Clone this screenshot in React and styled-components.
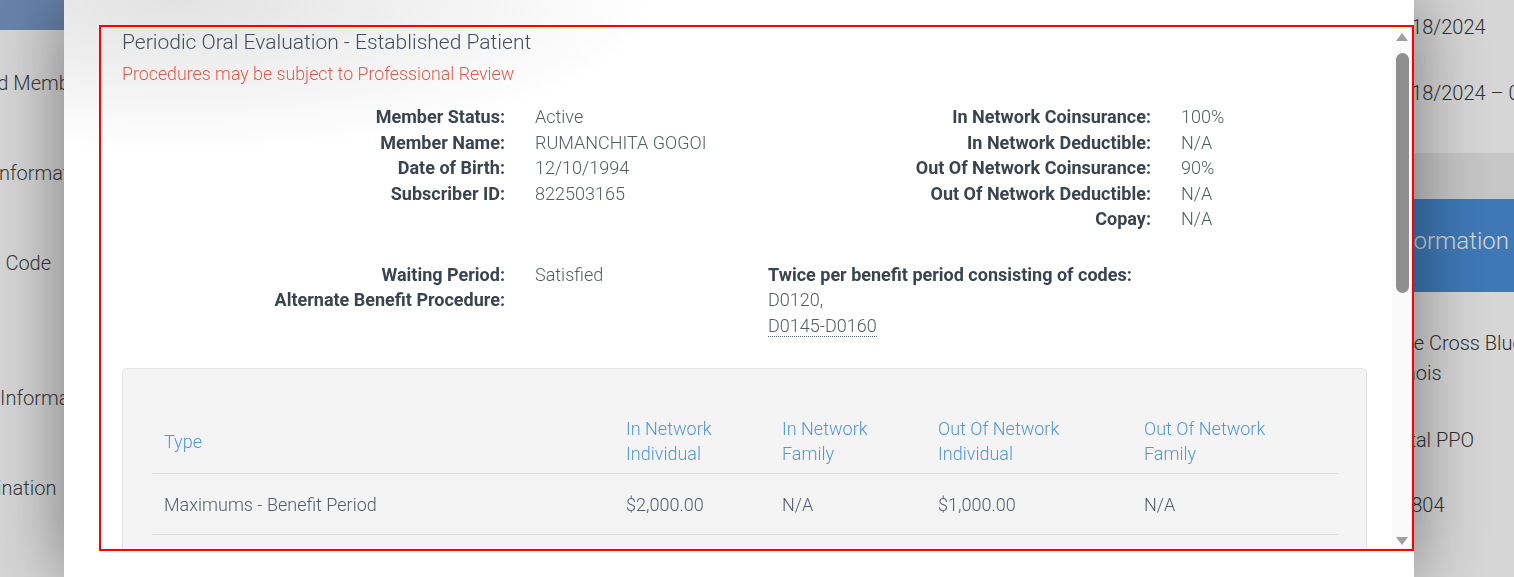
import React from 'react';
import styled, { createGlobalStyle } from 'styled-components';

const memberInfo = [
    ['Member Status:', 'Active'],
    ['Member Name:', 'RUMANCHITA GOGOI'],
    ['Date of Birth:', '12/10/1994'],
    ['Subscriber ID:', '822503165'],
];

const coverageInfo = [
    ['In Network Coinsurance:', '100%'],
    ['In Network Deductible:', 'N/A'],
    ['Out Of Network Coinsurance:', '90%'],
    ['Out Of Network Deductible:', 'N/A'],
    ['Copay:', 'N/A'],
];

const waitingInfo = [
    ['Waiting Period:', 'Satisfied'],
    ['Alternate Benefit Procedure:', ''],
];

const columns = [
    { lines: ['Type'], width: 462 },
    { lines: ['In Network', 'Individual'], width: 156 },
    { lines: ['In Network', 'Family'], width: 156 },
    { lines: ['Out Of Network', 'Individual'], width: 206 },
    { lines: ['Out Of Network', 'Family'], width: 206 },
];

const limitRows = [
    ['Maximums - Benefit Period', '$2,000.00', 'N/A', '$1,000.00', 'N/A'],
    ['Maximums - Lifetime', 'N/A', 'N/A', 'N/A', 'N/A'],
    ['Deductibles - Benefit Period', 'N/A', 'N/A', 'N/A', 'N/A'],
];

// page behind the dialog, only slivers of it show
const sideLabels = [
    { text: 'Insured Member', shift: -57, gap: 38 },
    { text: 'Subscriber Information', shift: -105, gap: 60 },
    { text: 'Group Code', shift: -53, gap: 60 },
    { text: 'Provider Information', shift: -77, gap: 105 },
    { text: 'Coordination', shift: -56, gap: 60 },
];

const planFields = [
    { text: 'Blue Cross Blue Shield of Illinois', shift: 0, gap: 0, wrap: true },
    { text: 'Dental PPO', shift: -11, gap: 37 },
    { text: '10804', shift: 3, gap: 35 },
];

const ArrowIcon = ({ down }) => (
    <svg width='12' height='8' viewBox='0 0 12 8'>
        <polygon points={down ? '0,0 12,0 6,8' : '6,0 12,8 0,8'} fill='#a0a0a0' />
    </svg>
);

const App = () => {
    return (
        <>
            <GlobalStyle />
            <Page>
                <LeftCard>
                    <LeftHeader />
                    {sideLabels.map((item) => (
                        <SideLabel key={item.text} $shift={item.shift} $gap={item.gap}>
                            {item.text}
                        </SideLabel>
                    ))}
                </LeftCard>

                <RightColumn>
                    <DateCard>
                        <SideText>01/18/2024</SideText>
                        <SideText $gap={36}>01/18/2024 – 01/18/2025</SideText>
                    </DateCard>
                    <PlanCard>
                        <PlanHeader>Information</PlanHeader>
                        <PlanBody>
                            {planFields.map((item) => (
                                <SideText
                                    key={item.text}
                                    $shift={item.shift}
                                    $gap={item.gap}
                                    $wrap={item.wrap}
                                >
                                    {item.text}
                                </SideText>
                            ))}
                        </PlanBody>
                    </PlanCard>
                </RightColumn>
            </Page>

            <Overlay>
                <Modal>
                    <ScrollFrame>
                        <Viewport>
                            <Content>
                                <Title>Periodic Oral Evaluation - Established Patient</Title>
                                <Notice>Procedures may be subject to Professional Review</Notice>

                                <InfoGrid>
                                    <FieldList>
                                        {memberInfo.map(([label, value]) => (
                                            <React.Fragment key={label}>
                                                <Label>{label}</Label>
                                                <Value>{value}</Value>
                                            </React.Fragment>
                                        ))}
                                    </FieldList>
                                    <FieldList>
                                        {coverageInfo.map(([label, value]) => (
                                            <React.Fragment key={label}>
                                                <Label>{label}</Label>
                                                <Value>{value}</Value>
                                            </React.Fragment>
                                        ))}
                                    </FieldList>
                                </InfoGrid>

                                <InfoGrid $spaced>
                                    <FieldList>
                                        {waitingInfo.map(([label, value]) => (
                                            <React.Fragment key={label}>
                                                <Label>{label}</Label>
                                                <Value>{value}</Value>
                                            </React.Fragment>
                                        ))}
                                    </FieldList>
                                    <Frequency>
                                        <FrequencyTitle>Twice per benefit period consisting of codes:</FrequencyTitle>
                                        <Value>D0120,</Value>
                                        <Value>
                                            <CodeRange title='D0145, D0150, D0160'>D0145-D0160</CodeRange>
                                        </Value>
                                    </Frequency>
                                </InfoGrid>

                                <LimitsCard>
                                    <Table>
                                        <colgroup>
                                            {columns.map((col, i) => (
                                                <col key={i} style={{ width: col.width }} />
                                            ))}
                                        </colgroup>
                                        <thead>
                                            <tr>
                                                {columns.map((col, i) => (
                                                    <HeadCell key={i}>
                                                        {col.lines.map((line) => (
                                                            <HeadLine key={line}>{line}</HeadLine>
                                                        ))}
                                                    </HeadCell>
                                                ))}
                                            </tr>
                                        </thead>
                                        <tbody>
                                            {limitRows.map((row) => (
                                                <tr key={row[0]}>
                                                    {row.map((cell, i) => (
                                                        <Cell key={i}>{cell}</Cell>
                                                    ))}
                                                </tr>
                                            ))}
                                        </tbody>
                                    </Table>
                                </LimitsCard>
                            </Content>
                        </Viewport>

                        <ScrollTrack>
                            <ArrowButton $pad={6}>
                                <ArrowIcon />
                            </ArrowButton>
                            <Thumb />
                            <ArrowButton $pad={10}>
                                <ArrowIcon down />
                            </ArrowButton>
                        </ScrollTrack>
                    </ScrollFrame>
                </Modal>
            </Overlay>
        </>
    );
};

export default App;

/* styles */
const GlobalStyle = createGlobalStyle`
    * {
        box-sizing: border-box;
    }
    html, body {
        margin: 0;
        padding: 0;
        height: 100%;
        overflow: hidden;
    }
    body {
        font-family: Roboto, 'Liberation Sans', Arial, sans-serif;
        background: #ececec;
    }
`;

const Page = styled.div`
    display: flex;
    align-items: flex-start;
    width: 1834px;
    min-height: 100vh;
    background: #ececec;
`;

const LeftCard = styled.section`
    width: 600px;
    min-height: 100vh;
    background: #fff;
`;

const LeftHeader = styled.div`
    height: 30px;
    background: #7c9ccd;
`;

const SideLabel = styled.div`
    margin-top: ${(p) => p.$gap}px;
    margin-left: ${(p) => p.$shift}px;
    font-size: 20px;
    font-weight: 300;
    line-height: 30px;
    color: #454545;
    white-space: nowrap;
`;

const RightColumn = styled.aside`
    margin-left: auto;
    width: 468px;
    display: flex;
    flex-direction: column;
    gap: 46px;
`;

const DateCard = styled.div`
    display: flex;
    flex-direction: column;
    padding: 12px 20px 45px 15px;
    background: #fff;
`;

const PlanCard = styled.div`
    background: #fff;
    min-height: 420px;
`;

const PlanHeader = styled.div`
    height: 93px;
    display: flex;
    align-items: center;
    padding: 0 0 9px 20px;
    background: #4a90d9;
    color: #fff;
    font-size: 24px;
    font-weight: 300;
`;

const PlanBody = styled.div`
    display: flex;
    flex-direction: column;
    padding: 36px 20px;
`;

const SideText = styled.div`
    width: ${(p) => (p.$wrap ? '250px' : 'auto')};
    margin-left: ${(p) => p.$shift || 0}px;
    margin-top: ${(p) => p.$gap || 0}px;
    font-size: 20px;
    font-weight: 300;
    line-height: 30px;
    color: #3a3a3a;
    white-space: ${(p) => (p.$wrap ? 'normal' : 'nowrap')};
`;

const Overlay = styled.div`
    position: fixed;
    inset: 0;
    display: flex;
    background: rgba(0, 0, 0, 0.16);
`;

const Modal = styled.div`
    width: 1350px;
    height: 100%;
    margin-left: 64px;
    display: flex;
    flex-direction: column;
    padding: 25px 0 26px 35px;
    background:
        radial-gradient(ellipse 480px 150px at 110px 0, #e2e2e2 0%, rgba(255, 255, 255, 0) 100%),
        #fff;
    box-shadow: 0 0 70px rgba(0, 0, 0, 0.45);
`;

const ScrollFrame = styled.div`
    flex: 1;
    min-height: 0;
    display: flex;
    border: 2px solid #ff0000;
`;

const Viewport = styled.div`
    flex: 1;
    min-width: 0;
    overflow: hidden;
`;

const ScrollTrack = styled.div`
    width: 20px;
    flex-shrink: 0;
    display: flex;
    flex-direction: column;
    align-items: center;
    background: #fafafa;
`;

const ArrowButton = styled.div`
    height: 22px;
    flex-shrink: 0;
    display: flex;
    justify-content: center;
    padding-top: ${(p) => p.$pad}px;

    svg {
        display: block;
    }
`;

const Thumb = styled.div`
    width: 13px;
    height: 240px;
    margin: 4px 0 auto;
    border-radius: 7px;
    background: #8f8f8f;
`;

const Content = styled.div`
    padding: 3px 25px 40px 21px;
    font-size: 18px;
    color: #3b4350;
`;

const Title = styled.h2`
    margin: 0;
    font-size: 21px;
    font-weight: 300;
    line-height: 24px;
    color: #474d58;
`;

const Notice = styled.p`
    margin: 8px 0 0;
    font-size: 17.8px;
    font-weight: 300;
    line-height: 24px;
    color: #e8584a;
`;

const InfoGrid = styled.div`
    display: grid;
    grid-template-columns: 646px 1fr;
    margin-top: ${(p) => (p.$spaced ? '30px' : '18px')};
    line-height: 25.5px;
`;

const FieldList = styled.div`
    display: grid;
    grid-template-columns: 383px 1fr;
    column-gap: 30px;
    align-content: start;
`;

const Label = styled.span`
    text-align: right;
    font-weight: 700;
    color: #3b4350;
`;

const Value = styled.span`
    font-weight: 300;
    color: #555b66;
`;

const Frequency = styled.div`
    display: flex;
    flex-direction: column;
`;

const FrequencyTitle = styled.span`
    font-weight: 700;
    color: #3b4350;
`;

const CodeRange = styled.abbr`
    text-decoration: none;
    border-bottom: 1px dotted #555b66;
    cursor: help;
`;

const LimitsCard = styled.div`
    margin-top: 30px;
    padding: 39px 28px 30px 29px;
    background: #f4f4f4;
    border: 1px solid #e4e4e4;
    border-radius: 5px;
`;

const Table = styled.table`
    width: 100%;
    table-layout: fixed;
    border-collapse: collapse;
    line-height: 25px;
`;

const HeadCell = styled.th`
    padding: 8px 12px 7px;
    text-align: left;
    vertical-align: middle;
    font-weight: 300;
    color: #5596d8;
    border-bottom: 1px solid #dcdcdc;
`;

const HeadLine = styled.span`
    display: block;
    white-space: nowrap;
`;

const Cell = styled.td`
    padding: 18px 12px 17px;
    font-weight: 300;
    color: #555b66;
    border-bottom: 1px solid #dcdcdc;
`;
